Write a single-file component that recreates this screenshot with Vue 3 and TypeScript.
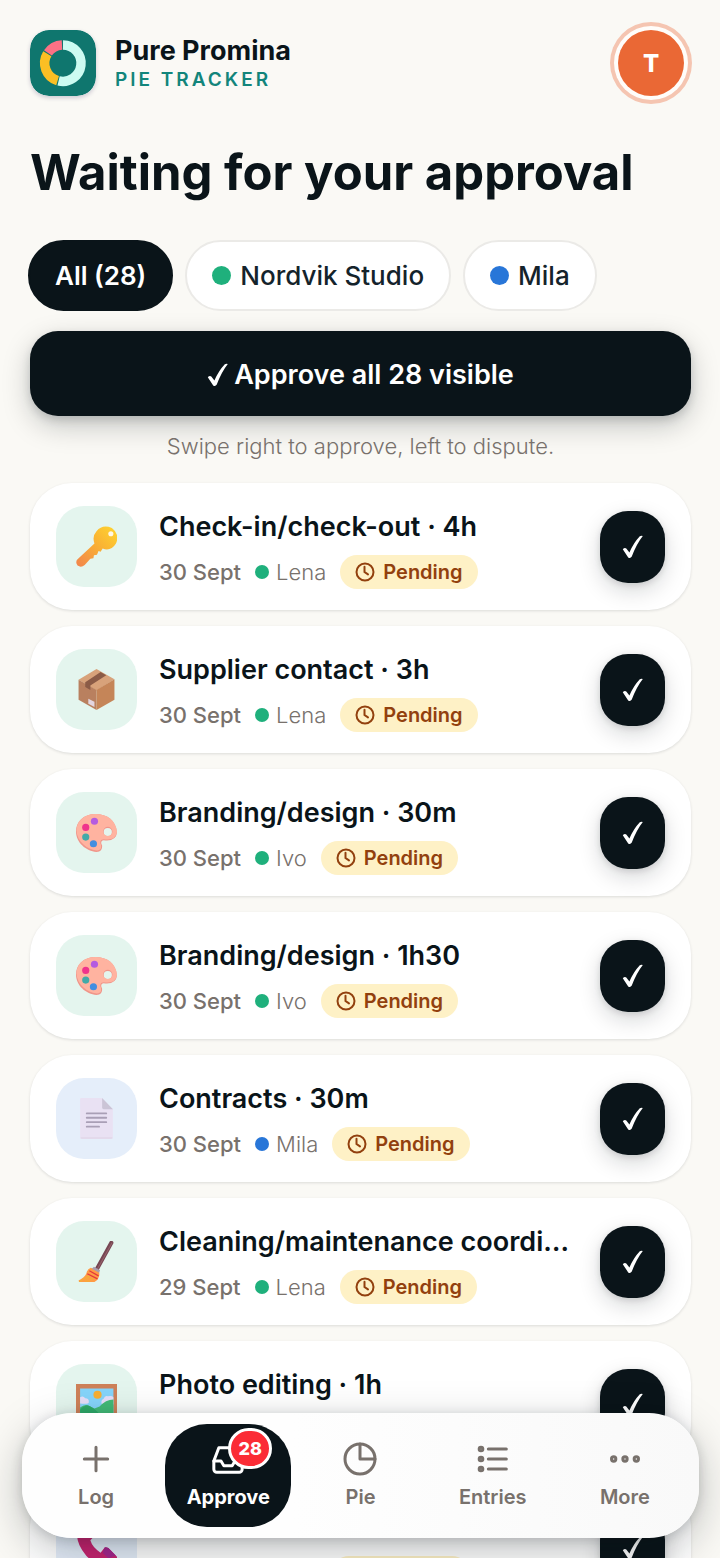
<script setup lang="ts">
import { ref } from 'vue'

type Tone = 'green' | 'blue'
type Emoji = 'key' | 'box' | 'palette' | 'page' | 'broom' | 'frame' | 'phone'
interface Entry {
  title: string
  date: string
  person: string
  tone: Tone
  emoji: Emoji
}

const entries: Entry[] = [
  { title: 'Check-in/check-out · 4h', date: '30 Sept', person: 'Lena', tone: 'green', emoji: 'key' },
  { title: 'Supplier contact · 3h', date: '30 Sept', person: 'Lena', tone: 'green', emoji: 'box' },
  { title: 'Branding/design · 30m', date: '30 Sept', person: 'Ivo', tone: 'green', emoji: 'palette' },
  { title: 'Branding/design · 1h30', date: '30 Sept', person: 'Ivo', tone: 'green', emoji: 'palette' },
  { title: 'Contracts · 30m', date: '30 Sept', person: 'Mila', tone: 'blue', emoji: 'page' },
  { title: 'Cleaning/maintenance coordination · 2h', date: '29 Sept', person: 'Lena', tone: 'green', emoji: 'broom' },
  { title: 'Photo editing · 1h', date: '29 Sept', person: 'Ivo', tone: 'green', emoji: 'frame' },
  { title: 'Phone calls · 1h', date: '29 Sept', person: 'Mila', tone: 'blue', emoji: 'phone' },
]

const filters: { label: string; tone?: Tone }[] = [
  { label: 'All (28)' },
  { label: 'Nordvik Studio', tone: 'green' },
  { label: 'Mila', tone: 'blue' },
]
const activeFilter = ref('All (28)')

const tabs = ['Log', 'Approve', 'Pie', 'Entries', 'More']
const activeTab = ref('Approve')
</script>

<template>
  <div class="screen">
    <div class="scroll">
      <header class="top">
        <svg class="logo" viewBox="0 0 66 66" aria-hidden="true">
          <rect width="66" height="66" rx="19" fill="#0f766e" />
          <g fill="none" stroke-width="9.5">
            <path d="M33 15a18.2 18.2 0 1 1-4.4 35.9" stroke="#ccfbf1" />
            <path d="M27.6 50.6A18.2 18.2 0 0 1 17.3 23.8" stroke="#fbbf24" />
            <path d="M17.9 22.9A18.2 18.2 0 0 1 32 15" stroke="#fb7185" />
          </g>
        </svg>
        <div class="brand">
          <span class="brand-name">Pure Promina</span>
          <span class="brand-sub">PIE TRACKER</span>
        </div>
        <button class="avatar" type="button" aria-label="Account">T</button>
      </header>

      <main>
        <h1>Waiting for your approval</h1>

        <div class="filters">
          <button
            v-for="f in filters"
            :key="f.label"
            type="button"
            class="chip"
            :class="{ active: activeFilter === f.label }"
            @click="activeFilter = f.label"
          >
            <span v-if="f.tone" class="dot large" :class="f.tone"></span>{{ f.label }}
          </button>
        </div>

        <button class="approve-all" type="button">
          <svg class="tick" viewBox="0 0 21 24" aria-hidden="true">
            <path d="M.8 14.2Q2.6 12.2 4.3 13.4L7.4 17.4Q11.7 7.6 17.8 1.2Q19.4 .2 20.8 1Q14.2 9.4 9.8 21.6Q8.2 24 6.2 22.4Z" fill="currentColor" />
          </svg>
          Approve all 28 visible
        </button>
        <p class="hint">Swipe right to approve, left to dispute.</p>

        <ul class="list">
          <li v-for="(e, i) in entries" :key="i" class="card">
            <div class="tile" :class="e.tone">
              <svg v-if="e.emoji === 'key'" viewBox="0 0 40 40" aria-hidden="true">
                <defs>
                  <linearGradient id="keyFill" x1="1" y1="0" x2="0" y2="1">
                    <stop offset="0" stop-color="#ffd62e" />
                    <stop offset=".5" stop-color="#f9ae35" />
                    <stop offset="1" stop-color="#f2844d" />
                  </linearGradient>
                </defs>
                <path d="M20 5Q26-2 35 2Q43 8 39 17Q34 25 26 22L24 25L22 24.500L20.500 28L17.500 28.500L17 31.500L14 32L8.500 38Q5 41 1.500 38.500Q-1 35 1.500 32.500L18 17Q15.500 10 20 5Z" fill="url(#keyFill)" />
                <circle cx="34" cy="7.500" r="2.500" fill="#fff7e5" />
              </svg>
              <svg v-else-if="e.emoji === 'box'" viewBox="0 0 40 40" aria-hidden="true">
                <path d="M2.500 10.500L20 0L37.500 10L20 21Z" fill="#d8a27a" />
                <path d="M2.500 10.500L20 20.500V40L2.500 30Z" fill="#b9805f" />
                <path d="M20 20.500L37.500 10V30L20 40Z" fill="#c58558" />
                <path d="M24 3L29.500 6L14 16V20.500L9 17.500V13Z" fill="#8b5b46" />
                <path d="M12 29L18 32V37L12 34Z" fill="#e3d5e0" />
              </svg>
              <svg v-else-if="e.emoji === 'palette'" viewBox="0 0 40 40" aria-hidden="true">
                <path fill-rule="evenodd" d="M19 2C7 2 0 10 0 19C0 30 10 38 20 39Q26 39 25.500 33Q23 28 27 27.500Q39 29 40 20C39 8 30 2 19 2ZM31 15.500A4 4 0 1 1 31 23.500A4 4 0 0 1 31 15.500Z" fill="#f0958a" />
                <path fill-rule="evenodd" d="M19 2C7 2 .5 10 .5 18C1 29 11 36.500 20 37.500Q25 38 24.500 32.500Q22 27 27 26.500Q39 28 40 19.500C39 8 30 2 19 2ZM31 14.500A4.500 4.500 0 1 1 31 23.500A4.500 4.500 0 0 1 31 14.500Z" fill="#ffb3a0" />
                <circle cx="18" cy="9" r="3.500" fill="#b55be0" />
                <circle cx="9.500" cy="15" r="3.500" fill="#f0338c" />
                <circle cx="9.500" cy="24.500" r="3.500" fill="#42aaa8" />
                <circle cx="17" cy="31" r="3.500" fill="#438ee0" />
              </svg>
              <svg v-else-if="e.emoji === 'page'" viewBox="0 0 40 40" aria-hidden="true">
                <path d="M5 0H25L36 11V38Q36 40 34 40H6Q4 40 4 38V1Q4 0 5 0Z" fill="#e9e1f3" />
                <path d="M25.500 0L36 11H27Q25.500 11 25.500 9Z" fill="#cbc4d6" />
                <path d="M4.500 39H35.500" stroke="#ded1e4" />
                <path d="M10.500 15H29.500M10.500 19.300H29.500M10.500 23.600H29.500M10.500 28H22.500" stroke="#a99fb6" stroke-width="1.800" stroke-linecap="round" />
              </svg>
              <svg v-else-if="e.emoji === 'broom'" viewBox="0 0 40 40" aria-hidden="true">
                <path d="M34.500 1.800L20 28" stroke="#764653" stroke-width="4" stroke-linecap="round" />
                <path d="M35 2L21 27" stroke="#96616a" stroke-width="1" stroke-linecap="round" />
                <path d="M14.500 26L22.500 30Q24 36 18 40L3 40L2.500 38.500Q8 36 10 32Q11 27 14.500 26Z" fill="#ff9b45" />
                <path d="M3 40L14 33L9 40M11 40L18 35" stroke="#f4af37" fill="none" />
                <path d="M17.500 25L23.500 28.500L22.500 31L15.500 27Z" fill="#a99bad" />
                <path d="M13 29L22 34M11 32L21 37" stroke="#e4393c" stroke-width="1.200" />
              </svg>
              <svg v-else-if="e.emoji === 'frame'" viewBox="0 0 40 40" aria-hidden="true">
                <path d="M0 0H40V36H0Z" fill="#ce8159" />
                <path d="M4 4.500H36.500V32H4Z" fill="#85d4fa" />
                <path d="M4 13Q7 11 9 14Q13 14 12.500 18Q12 20 4 19ZM25 19Q24 16 27 14.500Q28 11 31 12Q35 11 36.500 13V20H25Z" fill="#e5def8" />
                <circle cx="21" cy="10.500" r="4" fill="#f7af32" />
                <path d="M4 23Q9 19 13 21.500L18 24L23 22Q29 15 36.500 15V32H4Z" fill="#42ba77" />
                <path d="M4 25Q10 19 14 22Q21 26 25 32H4Z" fill="#2eaa69" />
              </svg>
              <svg v-else viewBox="0 0 40 40" aria-hidden="true">
                <path d="M3 1Q7-3 11 1L16 7Q18 10 14 13Q16 20 24 25L28 20Q31 19 34 23L40 29Q41 34 35 38Q26 44 10 28Q-3 12 3 1Z" fill="#c82370" />
                <path d="M28 20Q31 19 34 23L39 28Q36 28 32 31L26 25Z" fill="#a5268e" />
              </svg>
            </div>
            <div class="info">
              <h2>{{ e.title }}</h2>
              <div class="meta">
                <span class="date">{{ e.date }}</span>
                <span class="person"><span class="dot" :class="e.tone"></span>{{ e.person }}</span>
                <span class="status">
                  <svg viewBox="0 0 20 20" aria-hidden="true">
                    <circle cx="10" cy="10" r="8.500" />
                    <path d="M9.500 4.800V10L13 12.400" />
                  </svg>
                  Pending
                </span>
              </div>
            </div>
            <button class="approve" type="button" :aria-label="`Approve ${e.title}`">
              <svg class="tick" viewBox="0 0 21 24" aria-hidden="true">
                <path d="M.8 14.2Q2.6 12.2 4.3 13.4L7.4 17.4Q11.7 7.6 17.8 1.2Q19.4 .2 20.8 1Q14.2 9.4 9.8 21.6Q8.2 24 6.2 22.4Z" fill="currentColor" />
              </svg>
            </button>
          </li>
        </ul>
      </main>
    </div>

    <nav class="tabs">
      <button
        v-for="t in tabs"
        :key="t"
        type="button"
        class="tab"
        :class="{ active: activeTab === t }"
        @click="activeTab = t"
      >
        <span class="tab-icon">
          <svg viewBox="0 0 24 24" aria-hidden="true">
            <path v-if="t === 'Log'" d="M12 5v14M5 12h14" />
            <template v-else-if="t === 'Approve'">
              <path d="M3.500 13.200h4.300l1.700 2.800h5l1.700-2.800h4.300" />
              <path d="M6.500 5.200h11l3 8v5a1.800 1.800 0 0 1-1.800 1.800H5.300a1.800 1.800 0 0 1-1.800-1.800v-5z" />
            </template>
            <template v-else-if="t === 'Pie'">
              <circle cx="12" cy="12" r="9" />
              <path d="M12 3v9h9" />
            </template>
            <template v-else-if="t === 'Entries'">
              <path d="M9.200 6h10.800M9.200 12h10.800M9.200 18h10.800" />
              <circle v-for="y in [6, 12, 18]" :key="y" cx="4.800" :cy="y" r="1.100" />
            </template>
            <template v-else>
              <circle v-for="x in [5.200, 12, 18.800]" :key="x" :cx="x" cy="12" r="1.300" />
            </template>
          </svg>
          <span v-if="t === 'Approve'" class="count">28</span>
        </span>
        {{ t }}
      </button>
    </nav>
  </div>
</template>

<style>
body {
  background: #faf9f5;
}
</style>

<style scoped>
.screen {
  position: relative;
  height: 100vh;
  overflow: hidden;
  background: #faf9f5;
  color: #0a1419;
  font-family: Inter, "Noto Sans", sans-serif;
}
.scroll {
  height: 100%;
  overflow-y: auto;
  scrollbar-width: none;
  box-sizing: border-box;
  padding: 30px 29px 0 30px;
}
button {
  font: inherit;
  border: 0;
  padding: 0;
  cursor: pointer;
}
.top {
  display: flex;
  align-items: center;
  gap: 19px;
}
.logo {
  width: 66px;
  height: 66px;
  border-radius: 19px;
  box-shadow: 0 2px 4px rgba(30, 20, 80, 0.2);
}
.brand {
  display: flex;
  flex: 1;
  flex-direction: column;
  padding-top: 2px;
}
.brand-name {
  font-size: 27px;
  line-height: 32px;
  font-weight: 700;
}
.brand-sub {
  color: #12857b;
  font-size: 19px;
  line-height: 26px;
  font-weight: 600;
  letter-spacing: 3px;
}
.avatar {
  width: 66px;
  height: 66px;
  margin-right: 7px;
  border-radius: 50%;
  background: #ea6835;
  color: #fff;
  font-size: 24px;
  font-weight: 800;
  box-shadow: 0 0 0 4px #fffdfa, 0 0 0 8px #f5c5b1;
}
h1 {
  margin: 44px 0 0;
  font-size: 49px;
  line-height: 66px;
  font-weight: 700;
  white-space: nowrap;
}
.filters {
  display: flex;
  gap: 12px;
  margin: 34px 0 0 -2px;
}
.chip {
  display: flex;
  align-items: center;
  gap: 9px;
  height: 71px;
  box-sizing: border-box;
  padding: 0 25px;
  border: 2px solid #ebeae7;
  border-radius: 36px;
  background: #fff;
  color: #14232b;
  font-size: 26px;
  font-weight: 500;
  white-space: nowrap;
}
.chip.active {
  border-color: #0a1419;
  background: #0a1419;
  color: #fff;
  font-weight: 600;
}
.dot {
  flex: none;
  width: 14px;
  height: 14px;
  border-radius: 50%;
}
.dot.large {
  width: 19px;
  height: 19px;
}
.dot.green {
  background: #1fb07c;
}
.dot.blue {
  background: #2876d8;
}
.approve-all {
  display: flex;
  align-items: center;
  justify-content: center;
  gap: 6px;
  width: 100%;
  height: 85px;
  margin-top: 20px;
  padding-top: 2px;
  border-radius: 28px;
  background: #0a1419;
  color: #fff;
  font-size: 27px;
  font-weight: 600;
  box-shadow: 0 10px 28px rgba(10, 20, 25, 0.22), 0 4px 8px rgba(10, 20, 25, 0.14);
}
.tick {
  width: 21px;
  height: 24px;
}
.hint {
  margin: 14px 0 0;
  color: #78716c;
  font-size: 22px;
  line-height: 32px;
  font-weight: 300;
  text-align: center;
}
.list {
  display: flex;
  flex-direction: column;
  gap: 16px;
  margin: 21px 0 0;
  padding: 0 0 160px;
  list-style: none;
}
.card {
  display: flex;
  align-items: center;
  gap: 22px;
  height: 127px;
  box-sizing: border-box;
  padding: 0 26px;
  border-radius: 42px;
  background: #fff;
  box-shadow: 0 1px 3px rgba(10, 20, 25, 0.12);
}
.tile {
  display: flex;
  flex: none;
  align-items: center;
  justify-content: center;
  width: 81px;
  height: 81px;
  border-radius: 28px;
}
.tile.green {
  background: #e4f5ee;
}
.tile.blue {
  background: #e5eefa;
}
.tile svg {
  width: 41px;
  height: 41px;
}
.info {
  flex: 1;
  min-width: 0;
  padding-top: 3px;
}
h2 {
  overflow: hidden;
  margin: 0 0 9px;
  font-size: 27px;
  line-height: 38px;
  font-weight: 600;
  text-overflow: ellipsis;
  white-space: nowrap;
}
.meta {
  display: flex;
  align-items: center;
  gap: 14px;
  height: 34px;
  color: #78716c;
  font-size: 22px;
  white-space: nowrap;
}
.date {
  font-weight: 500;
}
.person {
  display: flex;
  align-items: center;
  gap: 7px;
  font-weight: 300;
}
.status {
  display: flex;
  align-items: center;
  gap: 8px;
  height: 34px;
  padding: 0 15px;
  border-radius: 17px;
  background: #fef1c6;
  color: #92400e;
  font-size: 20px;
  font-weight: 600;
}
.status svg {
  width: 20px;
  height: 20px;
  fill: none;
  stroke: currentColor;
  stroke-width: 2;
  stroke-linecap: round;
}
.approve {
  display: flex;
  flex: none;
  align-items: center;
  justify-content: center;
  width: 65px;
  height: 72px;
  border-radius: 28px;
  background: #0a1419;
  color: #fff;
  box-shadow: 0 8px 22px rgba(10, 20, 25, 0.16), 0 2px 6px rgba(10, 20, 25, 0.12);
}
.tabs {
  position: absolute;
  right: 21px;
  bottom: 20px;
  left: 22px;
  display: grid;
  grid-template-columns: repeat(5, 1fr);
  gap: 6px;
  padding: 11px;
  border-radius: 50px;
  background: linear-gradient(90deg, #fefefe 40%, #f9f9f9);
  box-shadow: 0 14px 44px rgba(10, 20, 25, 0.26), 0 2px 12px rgba(10, 20, 25, 0.16);
}
.tab {
  display: flex;
  flex-direction: column;
  align-items: center;
  height: 103px;
  padding-top: 15px;
  gap: 5px;
  border-radius: 42px;
  background: transparent;
  color: #78716c;
  font-size: 20px;
  line-height: 26px;
  font-weight: 600;
}
.tab.active {
  background: #0a1419;
  color: #fff;
  font-weight: 700;
}
.tab-icon {
  position: relative;
  height: 40px;
}
.tab-icon svg {
  width: 40px;
  height: 40px;
  fill: none;
  stroke: currentColor;
  stroke-width: 1.8;
  stroke-linecap: round;
  stroke-linejoin: round;
}
.count {
  position: absolute;
  top: -11px;
  left: 20px;
  min-width: 38px;
  box-sizing: content-box;
  height: 35px;
  border: 3px solid #fff;
  border-radius: 21px;
  background: #fb2c36;
  color: #fff;
  font-size: 18px;
  line-height: 35px;
  font-weight: 800;
  text-align: center;
}
</style>
